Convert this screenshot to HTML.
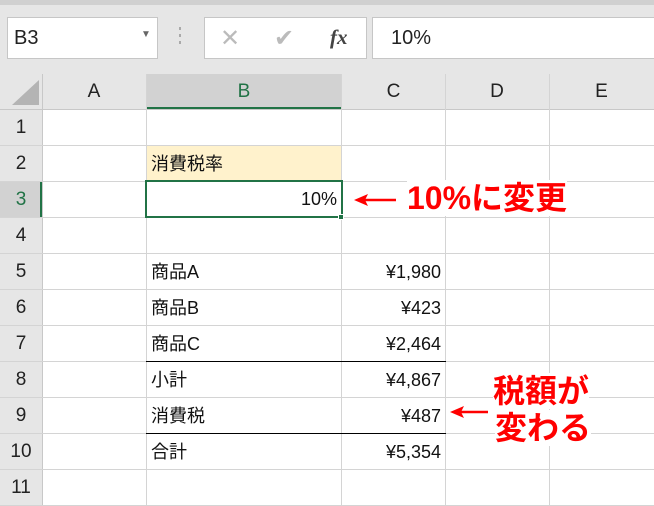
<!DOCTYPE html>
<html><head><meta charset="utf-8"><style>
*{margin:0;padding:0;box-sizing:border-box}
body{width:654px;height:506px;overflow:hidden;background:#fff;position:relative;font-family:"Liberation Sans","Noto Sans CJK JP",sans-serif;color:#111}
.a{position:absolute}
.vl{position:absolute;width:1px;background:#d4d4d4}
.hl{position:absolute;height:1px;background:#d4d4d4}
.ch{position:absolute;top:74px;height:35px;line-height:35px;text-align:center;font-size:19px;color:#222}
.rh{position:absolute;left:0;width:42px;height:36px;line-height:36px;text-align:center;font-size:19px;color:#222}
.c{position:absolute;height:36px;line-height:36px;font-size:18px;white-space:nowrap}
.r{text-align:right}
.red{position:absolute;color:#f00;font-weight:bold;font-size:32px;white-space:nowrap;background:#fff;line-height:36px}
</style></head><body>
<div class="a" style="left:0;top:0;width:654px;height:74px;background:#e6e6e6"></div>
<div class="a" style="left:0;top:0;width:654px;height:5px;background:#d0d0d0"></div>
<div class="a" style="left:7px;top:17px;width:151px;height:42px;background:#fff;border:1px solid #c6c6c6"></div>
<div class="a" style="left:14px;top:27px;font-size:20px;color:#222">B3</div>
<div class="a" style="left:141px;top:29px;font-size:10px;color:#666">▼</div>
<div class="a" style="left:179px;top:27px;width:2px;height:3px;background:#aaa;box-shadow:0 7px 0 #aaa,0 14px 0 #aaa"></div>
<div class="a" style="left:204px;top:17px;width:163px;height:42px;background:#fff;border:1px solid #c6c6c6"></div>
<div class="a" style="left:220px;top:24px;font-size:24px;color:#bbb">✕</div>
<div class="a" style="left:274px;top:24px;font-size:24px;color:#bbb">✔</div>
<div class="a" style="left:330px;top:25px;font-size:21px;color:#444;font-family:'Liberation Serif',serif;font-style:italic;font-weight:bold">fx</div>
<div class="a" style="left:372px;top:17px;width:290px;height:42px;background:#fff;border:1px solid #c6c6c6"></div>
<div class="a" style="left:391px;top:27px;font-size:20px;color:#222">10%</div>
<div class="a" style="left:0;top:74px;width:654px;height:35px;background:#e6e6e6"></div>
<div class="a" style="left:0;top:74px;width:42px;height:432px;background:#e6e6e6"></div>
<div class="a" style="left:146px;top:74px;width:196px;height:35px;background:#d2d2d2"></div>
<div class="a" style="left:146px;top:107px;width:196px;height:2px;background:#217346"></div>
<div class="a" style="left:0;top:182px;width:42px;height:35px;background:#d2d2d2"></div>
<div class="a" style="left:40px;top:182px;width:2px;height:35px;background:#217346"></div>
<svg class="a" style="left:10px;top:78px" width="30" height="28"><polygon points="29,2 29,27 2,27" fill="#b4b4b4"/></svg>
<div class="ch" style="left:42px;width:104px">A</div>
<div class="ch" style="left:146px;width:196px;color:#217346">B</div>
<div class="ch" style="left:342px;width:103px">C</div>
<div class="ch" style="left:445px;width:104px">D</div>
<div class="ch" style="left:549px;width:105px">E</div>
<div class="a" style="left:0;top:109px;width:654px;height:1px;background:#c8c8c8"></div>
<div class="vl" style="left:42px;top:74px;height:432px;background:#c8c8c8"></div>
<div class="vl" style="left:146px;top:74px;height:432px"></div>
<div class="vl" style="left:341px;top:74px;height:432px"></div>
<div class="vl" style="left:445px;top:74px;height:432px"></div>
<div class="vl" style="left:549px;top:74px;height:432px"></div>
<div class="hl" style="left:0;top:145px;width:654px"></div>
<div class="hl" style="left:0;top:181px;width:654px"></div>
<div class="hl" style="left:0;top:217px;width:654px"></div>
<div class="hl" style="left:0;top:253px;width:654px"></div>
<div class="hl" style="left:0;top:289px;width:654px"></div>
<div class="hl" style="left:0;top:325px;width:654px"></div>
<div class="hl" style="left:0;top:361px;width:654px"></div>
<div class="hl" style="left:0;top:397px;width:654px"></div>
<div class="hl" style="left:0;top:433px;width:654px"></div>
<div class="hl" style="left:0;top:469px;width:654px"></div>
<div class="hl" style="left:0;top:505px;width:654px"></div>
<div class="rh" style="top:110px">1</div>
<div class="rh" style="top:146px">2</div>
<div class="rh" style="top:182px;color:#217346">3</div>
<div class="rh" style="top:218px">4</div>
<div class="rh" style="top:254px">5</div>
<div class="rh" style="top:290px">6</div>
<div class="rh" style="top:326px">7</div>
<div class="rh" style="top:362px">8</div>
<div class="rh" style="top:398px">9</div>
<div class="rh" style="top:434px">10</div>
<div class="rh" style="top:470px">11</div>
<div class="a" style="left:147px;top:146px;width:194px;height:35px;background:#fff2cc"></div>
<div class="c" style="left:151px;top:146px">消費税率</div>
<div class="a" style="left:145px;top:180px;width:198px;height:38px;border:2px solid #217346"></div>
<div class="a" style="left:338px;top:214px;width:6px;height:6px;background:#217346;border:1px solid #fff"></div>
<div class="c r" style="left:150px;width:187px;top:181px">10%</div>
<div class="c" style="left:151px;top:254px">商品A</div><div class="c r" style="left:342px;width:99px;top:254px">¥1,980</div>
<div class="c" style="left:151px;top:290px">商品B</div><div class="c r" style="left:342px;width:99px;top:290px">¥423</div>
<div class="c" style="left:151px;top:326px">商品C</div><div class="c r" style="left:342px;width:99px;top:326px">¥2,464</div>
<div class="c" style="left:151px;top:362px">小計</div><div class="c r" style="left:342px;width:99px;top:362px">¥4,867</div>
<div class="c" style="left:151px;top:398px">消費税</div><div class="c r" style="left:342px;width:99px;top:398px">¥487</div>
<div class="c" style="left:151px;top:434px">合計</div><div class="c r" style="left:342px;width:99px;top:434px">¥5,354</div>
<div class="a" style="left:146px;top:361px;width:300px;height:1px;background:#000"></div>
<div class="a" style="left:146px;top:433px;width:300px;height:1px;background:#000"></div>
<svg class="a" style="left:352px;top:192px" width="46" height="16"><line x1="10" y1="8" x2="44" y2="8" stroke="#f00" stroke-width="2.5"/><polygon points="2,8 16,2 13,8 16,14" fill="#f00"/></svg>
<div class="red" style="left:407px;top:180px">10%に変更</div>
<svg class="a" style="left:448px;top:404px" width="42" height="16"><line x1="10" y1="8" x2="40" y2="8" stroke="#f00" stroke-width="2.5"/><polygon points="2,8 16,2 13,8 16,14" fill="#f00"/></svg>
<div class="red" style="left:493px;top:373px">税額が</div>
<div class="red" style="left:495px;top:410px">変わる</div>
</body></html>
